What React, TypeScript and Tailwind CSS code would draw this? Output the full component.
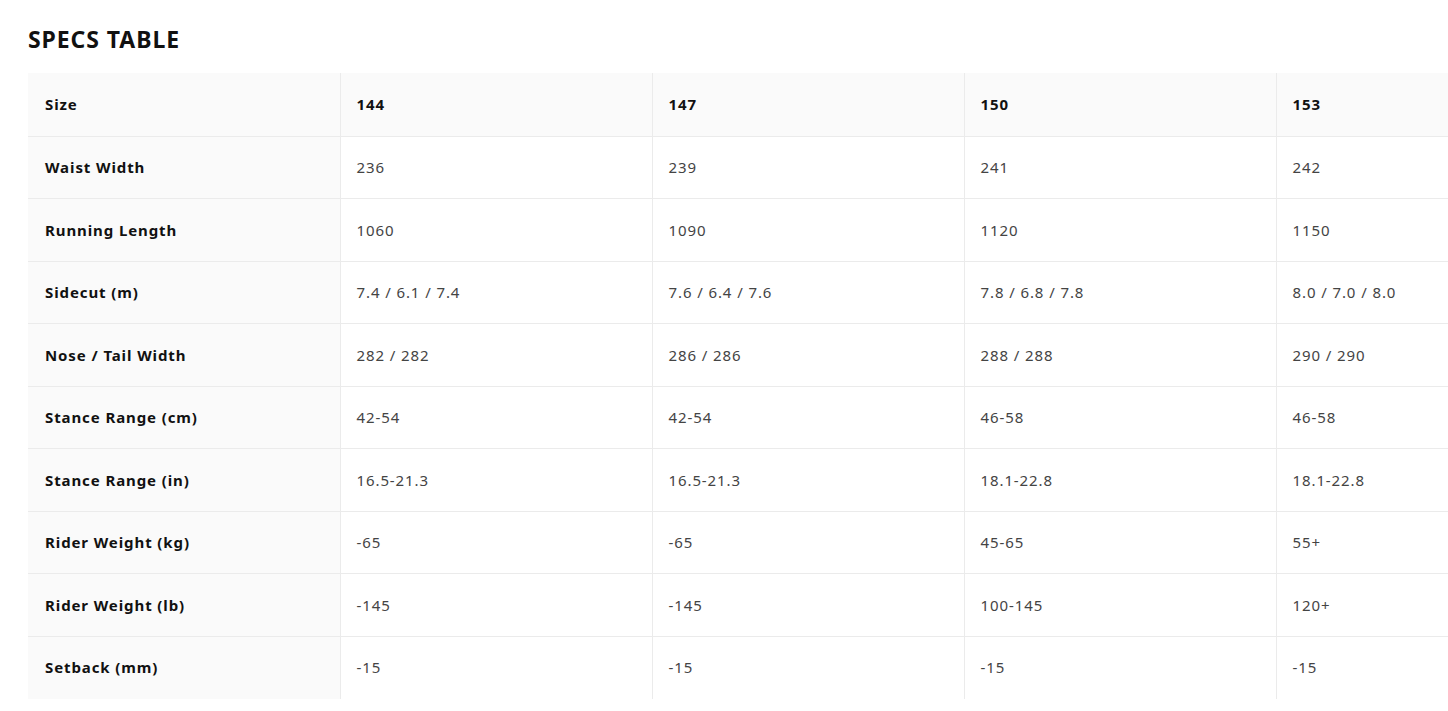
const sizes = ["144", "147", "150", "153"];

const rows: { label: string; values: string[] }[] = [
    { label: "Waist Width", values: ["236", "239", "241", "242"] },
    { label: "Running Length", values: ["1060", "1090", "1120", "1150"] },
    { label: "Sidecut (m)", values: ["7.4 / 6.1 / 7.4", "7.6 / 6.4 / 7.6", "7.8 / 6.8 / 7.8", "8.0 / 7.0 / 8.0"] },
    { label: "Nose / Tail Width", values: ["282 / 282", "286 / 286", "288 / 288", "290 / 290"] },
    { label: "Stance Range (cm)", values: ["42-54", "42-54", "46-58", "46-58"] },
    { label: "Stance Range (in)", values: ["16.5-21.3", "16.5-21.3", "18.1-22.8", "18.1-22.8"] },
    { label: "Rider Weight (kg)", values: ["-65", "-65", "45-65", "55+"] },
    { label: "Rider Weight (lb)", values: ["-145", "-145", "100-145", "120+"] },
    { label: "Setback (mm)", values: ["-15", "-15", "-15", "-15"] }
];

const App = () => {
    return (
        <div className="min-h-screen bg-white overflow-hidden" style={{ fontFamily: "'Noto Sans', 'Liberation Sans', sans-serif" }}>
            <div className="pl-[28px] pt-[24px]">
                <h2 className="text-[23px] font-bold leading-[30px] tracking-[0.04em] text-[#111]">SPECS TABLE</h2>

                <div className="mt-[19px] overflow-hidden">
                    <table className="table-fixed border-collapse w-[1420px] text-[15px] tracking-[0.06em]">
                        <tbody>
                            <tr className="h-[63px] bg-[#fafafa] border-b border-[#ebebeb]">
                                <td className="w-[312px] pl-[17px] font-bold text-[#111]">Size</td>
                                {sizes.map((s, j) => (
                                    <td
                                        key={s}
                                        className={`${j < sizes.length - 1 ? "w-[312px]" : ""} pl-[16px] font-bold text-[#111] border-l border-[#ebebeb]`}
                                    >
                                        {s}
                                    </td>
                                ))}
                            </tr>
                            {rows.map((row, i) => (
                                <tr key={row.label} className={`h-[62.5px] ${i < rows.length - 1 ? "border-b border-[#ebebeb]" : ""}`}>
                                    <td className="pl-[17px] bg-[#fafafa] font-bold text-[#111]">{row.label}</td>
                                    {row.values.map((v, j) => (
                                        <td key={j} className="pl-[16px] text-[#444] border-l border-[#ebebeb] whitespace-nowrap">
                                            {v}
                                        </td>
                                    ))}
                                </tr>
                            ))}
                        </tbody>
                    </table>
                </div>
            </div>
        </div>
    );
};

export default App;
